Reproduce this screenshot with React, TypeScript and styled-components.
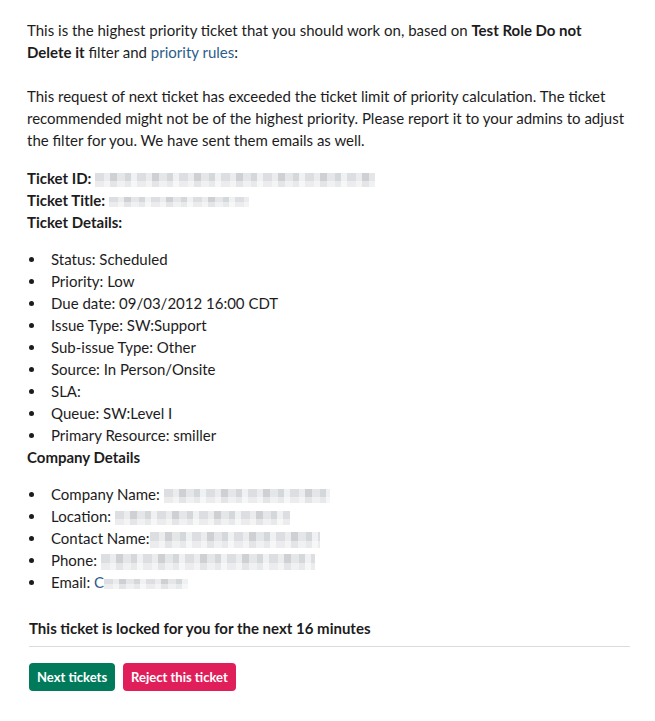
import React, {FC} from "react";
import styled, {createGlobalStyle} from "styled-components";

const GlobalStyle = createGlobalStyle`
  body {
    margin: 0;
    background: #ffffff;
    font-family: Lato, "Noto Sans", sans-serif;
    color: #1d1c1d;
  }
`;

const Message = styled.div`
  width: 603px;
  padding: 19px 0 30px 27px;
  font-size: 15px;
  line-height: 22px;
`;

const Para = styled.div<{ $narrow?: boolean }>`
  margin: 0;
  max-width: ${p => (p.$narrow ? "570px" : "none")};
`;

const Link = styled.span`
  color: #2d5d8a;
`;

const InfoBlock = styled.div<{ $gap: number }>`
  margin-top: ${p => p.$gap}px;
`;

const Bullets = styled.ul`
  list-style: none;
  margin: 15px 0 0 0;
  padding: 0;

  li {
    position: relative;
    padding-left: 24px;
  }

  li::before {
    content: "";
    position: absolute;
    left: 2px;
    top: 9px;
    width: 5px;
    height: 5px;
    border-radius: 50%;
    background: #1d1c1d;
  }
`;

const Redacted = styled.span<{ $w: number; $h?: number }>`
  display: inline-block;
  width: ${p => p.$w}px;
  height: ${p => p.$h ?? 12}px;
  vertical-align: middle;
  background:
    linear-gradient(180deg, rgba(255,255,255,0) 0 55%, rgba(255,255,255,0.45) 55% 100%),
    repeating-linear-gradient(90deg,
      #d9dbde 0 9px, #e9eaec 9px 15px, #c9ccd0 15px 22px,
      #e2e4e6 22px 30px, #d1d4d7 30px 36px, #eff0f1 36px 42px);
  opacity: 0.9;
`;

const Footer = styled.div`
  margin-top: 24px;
  padding-left: 2px;
`;

const Divider = styled.hr`
  border: none;
  border-top: 1px solid #dcdcdc;
  margin: 7px 0 0 0;
  width: 601px;
`;

const Actions = styled.div`
  display: flex;
  gap: 8px;
  margin-top: 16px;
`;

const ActionButton = styled.button<{ $tone: "green" | "red" }>`
  font-family: Lato, "Noto Sans", sans-serif;
  font-weight: 700;
  font-size: 13px;
  color: #ffffff;
  height: 28px;
  padding: 0 8px;
  border: none;
  border-radius: 4px;
  background: ${p => (p.$tone === "green" ? "#007a5a" : "#e01e5a")};
`;

const ticketDetails = [
  "Status: Scheduled",
  "Priority: Low",
  "Due date: 09/03/2012 16:00 CDT",
  "Issue Type: SW:Support",
  "Sub-issue Type: Other",
  "Source: In Person/Onsite",
  "SLA:",
  "Queue: SW:Level I",
  "Primary Resource: smiller",
];

export const TicketMessage: FC = () => {
  return (
    <Message>
      <Para $narrow>
        This is the highest priority ticket that you should work on, based on <b>Test Role Do not</b>{" "}
        <b>Delete it</b> filter and <Link>priority rules</Link>:
      </Para>
      <Para>&nbsp;</Para>
      <Para>
        This request of next ticket has exceeded the ticket limit of priority calculation. The ticket recommended might
        not be of the highest priority. Please report it to your admins to adjust the filter for you. We have sent them
        emails as well.
      </Para>

      <InfoBlock $gap={16}>
        <div><b>Ticket ID:</b> <Redacted $w={280} $h={14} /></div>
        <div><b>Ticket Title:</b> <Redacted $w={140} $h={10} /></div>
        <div><b>Ticket Details:</b></div>
        <Bullets>
          {ticketDetails.map(d => <li key={d}>{d}</li>)}
        </Bullets>
        <div><b>Company Details</b></div>
        <Bullets>
          <li>Company Name: <Redacted $w={166} $h={14} /></li>
          <li>Location: <Redacted $w={175} $h={14} /></li>
          <li>Contact Name:<Redacted $w={170} $h={16} /></li>
          <li>Phone: <Redacted $w={214} $h={16} /></li>
          <li>Email: <Link>C</Link><Redacted $w={84} $h={10} /></li>
        </Bullets>
      </InfoBlock>

      <Footer>
        <b>This ticket is locked for you for the next 16 minutes</b>
        <Divider />
        <Actions>
          <ActionButton $tone="green">Next tickets</ActionButton>
          <ActionButton $tone="red">Reject this ticket</ActionButton>
        </Actions>
      </Footer>
    </Message>
  );
};

export default function App() {
  return (
    <>
      <GlobalStyle />
      <TicketMessage />
    </>
  );
}
